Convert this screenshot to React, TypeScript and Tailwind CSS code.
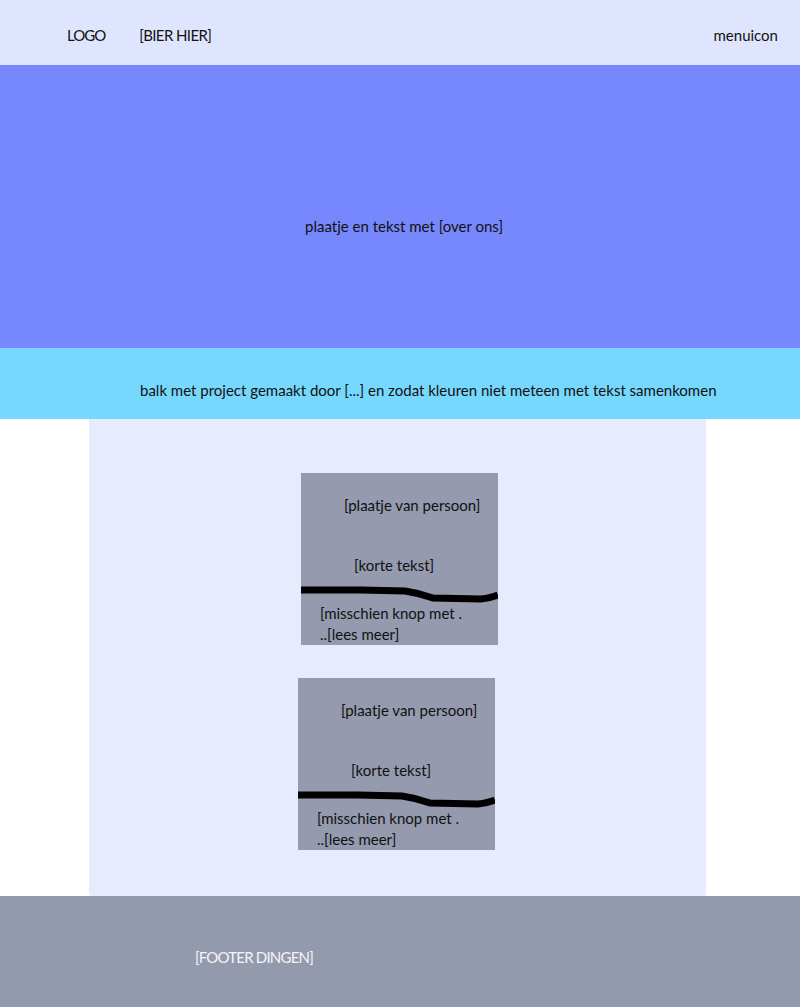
export default function App() {
  return (
    <div className="min-h-screen bg-white text-[15px] text-[#111] font-['Lato','Open_Sans',sans-serif]">
      {/* header */}
      <header className="h-[65px] bg-[#e0e5ff] flex items-center pl-[67px] pr-[22px] pt-[6px]">
        <span className="tracking-[-1px]">LOGO</span>
        <span className="ml-[34px] tracking-[-0.6px]">[BIER HIER]</span>
        <span className="ml-auto">menuicon</span>
      </header>

      {/* hero */}
      <section className="h-[283px] bg-[#7788ff] flex items-center justify-center pt-[40px]">
        <p className="ml-[8px]">plaatje en tekst met [over ons]</p>
      </section>

      {/* balk */}
      <section className="h-[71px] bg-[#77d8ff] flex items-center pl-[140px]">
        <p className="pt-[14px]">balk met project gemaakt door [...] en zodat kleuren niet meteen met tekst samenkomen</p>
      </section>

      {/* main */}
      <main className="pl-[89px] pr-[94px]">
        <div className="h-[477px] bg-[#e6ebff] rounded-b-[3px] pt-[54px] flex flex-col items-center gap-[33px]">
          <PersonCard className="ml-[4px]" />
          <PersonCard className="-ml-[2px]" />
        </div>
      </main>

      {/* footer */}
      <footer className="h-[111px] bg-[#949aae] pl-[195px] pt-[50px] text-[#f4f4f8] tracking-[-0.8px]">
        [FOOTER DINGEN]
      </footer>
    </div>
  );
}

function PersonCard({ className = '' }: { className?: string }) {
  return (
    <div className={`relative w-[197px] h-[172px] bg-[#959aae] ${className}`}>
      <p className="absolute left-[43px] top-[21px] whitespace-nowrap">[plaatje van persoon]</p>
      <p className="absolute left-[53px] top-[81px] whitespace-nowrap">[korte tekst]</p>
      <svg className="absolute left-0 top-[108px]" width="197" height="24" viewBox="0 0 197 24">
        <path
          d="M0 9 L60 9 L104 10 Q118 12 132 17 L180 18 Q190 17 197 14"
          fill="none"
          stroke="#000"
          strokeWidth="7"
        />
      </svg>
      <p className="absolute left-[19px] top-[130px] leading-[21px]">
        [misschien knop met .<br />..[lees meer]
      </p>
    </div>
  );
}
